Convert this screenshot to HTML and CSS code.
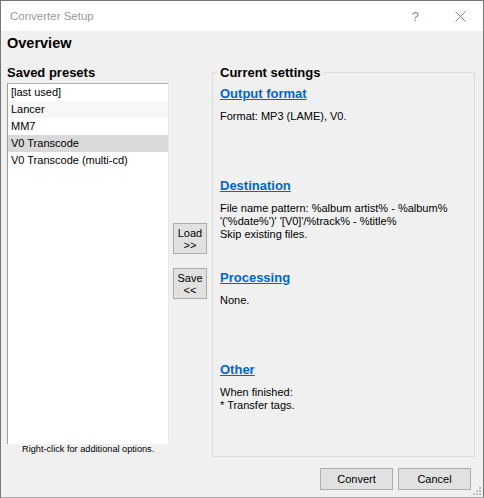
FILE: index.html
```html
<!DOCTYPE html>
<html>
<head>
<meta charset="utf-8">
<link rel="stylesheet" href="styles.css">
</head>
<body>
<div class="window">
  <div class="titlebar">
    <span class="title">Converter Setup</span>
    <span class="help">?</span>
    <svg class="close" width="11" height="11" viewBox="0 0 11 11"><path d="M0.5 0.5 L10.5 10.5 M10.5 0.5 L0.5 10.5" stroke="#8a8a8a" stroke-width="1" fill="none"/></svg>
  </div>
  <div class="content">
    <div class="heading">Overview</div>
    <div class="main">
      <div class="left">
        <div class="label">Saved presets</div>
        <div class="list">
          <div class="row">[last used]</div>
          <div class="row hover">Lancer</div>
          <div class="row">MM7</div>
          <div class="row selected">V0 Transcode</div>
          <div class="row">V0 Transcode (multi-cd)</div>
        </div>
        <div class="hint">Right-click for additional options.</div>
      </div>
      <div class="middle">
        <button class="btn small load">Load<br>&gt;&gt;</button>
        <button class="btn small save">Save<br>&lt;&lt;</button>
      </div>
      <fieldset class="group">
        <legend>Current settings</legend>
        <div class="section">
          <a class="link">Output format</a>
          <div class="text">Format: MP3 (LAME), V0.</div>
        </div>
        <div class="section">
          <a class="link">Destination</a>
          <div class="text">File name pattern: %album artist% - %album%<br>'('%date%')' '[V0]'/%track% - %title%<br>Skip existing files.</div>
        </div>
        <div class="section">
          <a class="link">Processing</a>
          <div class="text">None.</div>
        </div>
        <div class="section">
          <a class="link">Other</a>
          <div class="text">When finished:<br>* Transfer tags.</div>
        </div>
      </fieldset>
    </div>
    <div class="footer">
      <button class="btn wide">Convert</button>
      <button class="btn wide">Cancel</button>
    </div>
    <svg class="grip" width="9" height="9" viewBox="0 0 9 9">
      <rect x="6" y="0" width="2" height="2" fill="#bdbdbd"/>
      <rect x="3" y="3" width="2" height="2" fill="#bdbdbd"/>
      <rect x="6" y="3" width="2" height="2" fill="#bdbdbd"/>
      <rect x="0" y="6" width="2" height="2" fill="#bdbdbd"/>
      <rect x="3" y="6" width="2" height="2" fill="#bdbdbd"/>
      <rect x="6" y="6" width="2" height="2" fill="#bdbdbd"/>
    </svg>
  </div>
</div>
</body>
</html>
```
FILE: styles.css
```css
html, body {
  margin: 0;
  padding: 0;
  background: #f0f0f0;
}
body {
  font-family: "Liberation Sans", Arial, sans-serif;
  font-size: 11px;
  color: #000;
}
.window {
  width: 484px;
  height: 498px;
  box-sizing: border-box;
  border: 1px solid #767676;
  border-bottom-color: #a8a8a8;
  display: flex;
  flex-direction: column;
  background: #f0f0f0;
}
.titlebar {
  height: 30px;
  background: #fff;
  display: flex;
  align-items: center;
  flex-shrink: 0;
}
.title {
  margin-left: 9px;
  font-size: 11.5px;
  color: #999;
  flex: 1;
  padding-bottom: 1px;
}
.help {
  font-size: 13px;
  color: #8a8a8a;
  margin-right: 36px;
}
.close {
  margin-right: 17px;
}
.content {
  flex: 1;
  padding: 4px 8px 0 6px;
  display: flex;
  flex-direction: column;
  position: relative;
}
.heading {
  font-size: 14.5px;
  font-weight: bold;
  line-height: 16px;
}
.main {
  display: flex;
  align-items: flex-start;
  margin-top: 13.5px;
}
.left {
  width: 162px;
  flex-shrink: 0;
}
.label {
  font-size: 13px;
  font-weight: bold;
  line-height: 15px;
}
.list {
  margin-top: 3.5px;
  height: 361px;
  box-sizing: border-box;
  background: #fff;
  border-left: 1px solid #a0a0a0;
  border-top: 1px solid #b4b4b4;
  border-right: 1px solid #e8e8e8;
}
.row {
  height: 17px;
  line-height: 17px;
  padding-left: 3px;
  white-space: nowrap;
}
.row.hover {
  background: #f7f7f7;
}
.row.selected {
  background: #d9d9d9;
}
.hint {
  font-size: 9.2px;
  line-height: 11px;
  margin-left: 15px;
  color: #000;
}
.middle {
  width: 43px;
  flex-shrink: 0;
  display: flex;
  flex-direction: column;
  padding-left: 4px;
  box-sizing: border-box;
}
.btn {
  font-family: "Liberation Sans", Arial, sans-serif;
  font-size: 11px;
  background: #e1e1e1;
  border: 1px solid #adadad;
  color: #000;
  padding: 0;
  margin: 0;
  box-sizing: border-box;
}
.btn.small {
  width: 34px;
  height: 31px;
  line-height: 12px;
}
.btn.load {
  margin-top: 158.5px;
}
.btn.save {
  margin-top: 14px;
}
.group {
  width: 263px;
  height: 392px;
  box-sizing: border-box;
  margin: 0;
  padding: 6px 6px 0 7px;
  border: 1px solid #dcdcdc;
  min-width: 0;
}
.group legend {
  font-size: 13px;
  font-weight: bold;
  line-height: 15px;
  padding: 0 3px;
  margin-left: -3px;
}
.section {
  height: 92px;
}
.link {
  display: block;
  font-size: 13px;
  font-weight: bold;
  line-height: 15px;
  color: #0066cc;
  text-decoration: underline;
  width: max-content;
}
.text {
  margin-top: 9px;
  line-height: 13px;
  white-space: nowrap;
}
.footer {
  display: flex;
  justify-content: flex-end;
  gap: 5px;
  margin-top: 11.5px;
  margin-right: 4px;
}
.btn.wide {
  width: 73px;
  height: 22px;
}
.grip {
  position: absolute;
  right: 1px;
  bottom: 1px;
}
```
